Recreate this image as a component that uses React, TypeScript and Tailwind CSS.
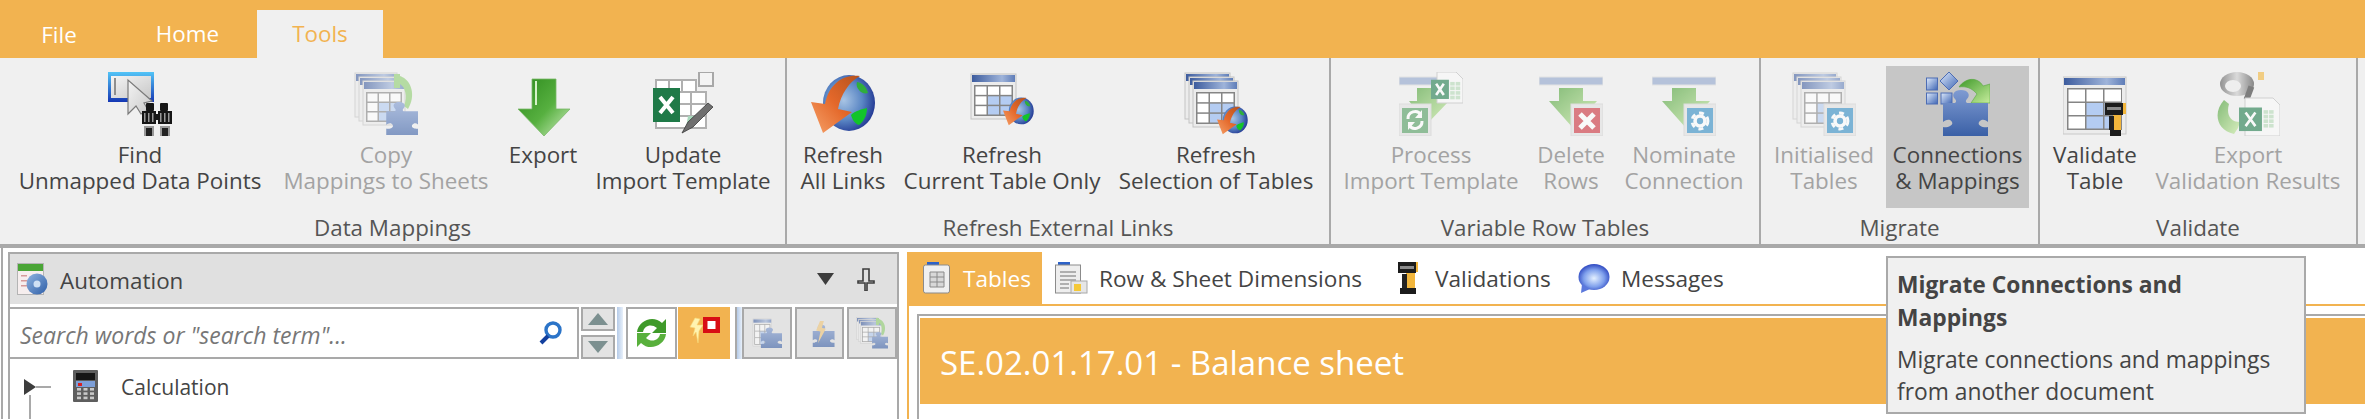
import React from "react";

const Gradients = () => (
  <svg className="block w-0 h-0" aria-hidden="true">
    <defs>
      <linearGradient id="gWin" x1="0" y1="0" x2="0" y2="1"><stop offset="0" stopColor="#52c4f7" /><stop offset="1" stopColor="#1437b4" /></linearGradient>
      <linearGradient id="gWinIn" x1="0" y1="0" x2="1" y2="1"><stop offset="0" stopColor="#f4f4f4" /><stop offset="1" stopColor="#c8c8c8" /></linearGradient>
      <linearGradient id="gHead" x1="0" y1="0" x2="1" y2="0"><stop offset="0" stopColor="#3d5c9e" /><stop offset="0.7" stopColor="#9fb4da" /><stop offset="1" stopColor="#5f7db8" /></linearGradient>
      <linearGradient id="gDown" x1="0" y1="0" x2="1" y2="1"><stop offset="0" stopColor="#2c8a1c" /><stop offset="0.55" stopColor="#57b040" /><stop offset="1" stopColor="#d2f0c2" /></linearGradient>
      <linearGradient id="gOrange" x1="1" y1="0" x2="0" y2="1"><stop offset="0" stopColor="#b5521e" /><stop offset="0.5" stopColor="#e4682a" /><stop offset="1" stopColor="#f6a26a" /></linearGradient>
      <radialGradient id="gGlobe" cx="0.4" cy="0.45" r="0.65"><stop offset="0" stopColor="#a8c4e4" /><stop offset="0.55" stopColor="#5a86c4" /><stop offset="1" stopColor="#1c2f8e" /></radialGradient>
      <linearGradient id="gPuzzle" x1="0" y1="0" x2="0" y2="1"><stop offset="0" stopColor="#7f9bd2" /><stop offset="1" stopColor="#3a60a6" /></linearGradient>
      <linearGradient id="gSq" x1="0" y1="0" x2="1" y2="1"><stop offset="0" stopColor="#dfeafb" /><stop offset="1" stopColor="#3f66b4" /></linearGradient>
      <linearGradient id="gArrow" x1="0" y1="0" x2="1" y2="1"><stop offset="0" stopColor="#3f9a2a" /><stop offset="1" stopColor="#c6ec9c" /></linearGradient>
      <linearGradient id="gMetal" x1="0" y1="0" x2="1" y2="0"><stop offset="0" stopColor="#555" /><stop offset="0.5" stopColor="#ccc" /><stop offset="1" stopColor="#444" /></linearGradient>
      <linearGradient id="gGear" x1="0" y1="0" x2="1" y2="1"><stop offset="0" stopColor="#8fb4e0" /><stop offset="1" stopColor="#2f5fa8" /></linearGradient>
      <radialGradient id="gBubble" cx="0.5" cy="0.55" r="0.55"><stop offset="0" stopColor="#e4f0ff" /><stop offset="0.6" stopColor="#7fa0ec" /><stop offset="1" stopColor="#2c46c0" /></radialGradient>
    </defs>
  </svg>
);

const Ico = ({ children, w = 64, h = 64, vb = "0 0 64 64", dim = false }: { children: React.ReactNode; w?: number; h?: number; vb?: string; dim?: boolean }) => (
  <svg width={w} height={h} viewBox={vb} className={dim ? "block shrink-0 opacity-60" : "block shrink-0"}>{children}</svg>
);

const Table = ({ x, y, w, h, plain = false }: { x: number; y: number; w: number; h: number; plain?: boolean }) => {
  const gx = x + 3, gy = y + 11, gw = w - 6, gh = h - 14;
  const cw = (gw - 6) / 3, ch = (gh - 6) / 3;
  const cells: React.ReactNode[] = [];
  if (!plain) {
    for (let r = 0; r < 3; r++) for (let c = 0; c < 3; c++) {
      const blue = (r === 1 && c >= 1) || (r === 2 && c >= 1);
      cells.push(<rect key={`${r}${c}`} x={gx + 1.5 + c * (cw + 1.5)} y={gy + 1.5 + r * (ch + 1.5)} width={cw} height={ch} fill={blue ? "#b4ccf2" : "#ffffff"} />);
    }
  }
  return (
    <g>
      <rect x={x} y={y} width={w} height={h} fill="#ececec" stroke="#c4c4c4" strokeWidth="1" />
      <rect x={x + 1} y={y + 1} width={w - 2} height={7} fill="url(#gHead)" />
      {!plain && <rect x={gx} y={gy} width={gw} height={gh} fill="#858585" />}
      {cells}
    </g>
  );
};

const Stack = ({ x = 0, y = 0, w = 42, h = 44 }: { x?: number; y?: number; w?: number; h?: number }) => (
  <g>
    <Table x={x} y={y} w={w} h={h} plain />
    <Table x={x + 4} y={y + 4} w={w} h={h} plain />
    <Table x={x + 8} y={y + 8} w={w} h={h} />
  </g>
);

const Globe = ({ t = "" }: { t?: string }) => (
  <g transform={t}>
    <ellipse cx="38" cy="31" rx="26" ry="28" fill="url(#gGlobe)" />
    <path d="M46 10c6 1 10 6 11 11-3 1-7 0-9-3-2-2-3-5-2-8z" fill="#2fae3c" />
    <path d="M40 43c4-4 11-6 16-7 0 7-3 13-8 17-4-1-7-6-8-10z" fill="#12c42a" />
    <path d="M49 4C32 2 18 12 14 32L0 30 12 61 41 40 27 37C30 22 38 10 49 4Z" fill="url(#gOrange)" />
  </g>
);

const PuzzlePiece = ({ t = "", fill = "url(#gPuzzle)" }: { t?: string; fill?: string }) => (
  <path
    transform={t}
    fill={fill}
    d="M17 31H28C30 31 31 29 29 27C25 23 28 18 35 18C42 18 45 23 41 27C39 29 40 31 42 31H62V50C60 48 56 46 53 50C51 54 58 56 62 55V64H17V55C20 56 28 54 26 50C24 46 19 48 17 50Z"
  />
);

const GreenCurve = ({ t = "" }: { t?: string }) => (
  <path transform={t} fill="url(#gArrow)" stroke="#5aa845" strokeWidth="0.6" d="M33 15C40 5 52 5 57 14L64 12V31H45L51 22C46 16 40 14 33 15Z" />
);

const Gear = ({ cx, cy, r = 9, c = "#fff" }: { cx: number; cy: number; r?: number; c?: string }) => (
  <g fill="none" stroke={c}>
    <circle cx={cx} cy={cy} r={r * 0.62} strokeWidth={r * 0.45} />
    <circle cx={cx} cy={cy} r={r} strokeWidth={r * 0.36} strokeDasharray={`${r * 0.62} ${r * 0.52}`} />
  </g>
);

const Badge = ({ x = 32, y = 32, s = 32, fill, children }: { x?: number; y?: number; s?: number; fill: string; children: React.ReactNode }) => (
  <g>
    <rect x={x} y={y} width={s} height={s} fill="#e2e2e2" stroke="#cfcfcf" />
    <rect x={x + 3} y={y + 4} width={s - 6} height={s - 7} fill={fill} />
    {children}
  </g>
);

const Excel = ({ x, y, w = 32, h = 31 }: { x: number; y: number; w?: number; h?: number }) => (
  <g>
    <path d={`M${x + 6} ${y}H${x + w - 7}L${x + w} ${y + 7}V${y + h}H${x + 6}Z`} fill="#fbfbfb" stroke="#bdbdbd" />
    <g fill="#b6dcb8">
      {[0, 1, 2, 3].map((r) => [0, 1].map((c) => (
        <rect key={`${r}${c}`} x={x + w * 0.6 + c * 5.5} y={y + h * 0.32 + r * 4.6} width={4.5} height={3.6} />
      )))}
    </g>
    <rect x={x} y={y + h * 0.25} width={w * 0.56} height={h * 0.62} fill="#1f7d4c" />
    <path d={`M${x + w * 0.16} ${y + h * 0.38}L${x + w * 0.4} ${y + h * 0.74}M${x + w * 0.4} ${y + h * 0.38}L${x + w * 0.16} ${y + h * 0.74}`} stroke="#fff" strokeWidth="2.6" />
  </g>
);

const Torch = ({ t = "" }: { t?: string }) => (
  <g transform={t}>
    <rect x="42" y="31" width="18" height="12" fill="#1c1c1c" />
    <rect x="44" y="35" width="14" height="3" fill="#8a8a8a" />
    <rect x="60" y="31" width="3" height="11" fill="#f2b63c" />
    <rect x="50" y="43" width="8" height="16" fill="#f2b63c" />
    <rect x="46" y="44" width="5" height="14" fill="#222" />
    <rect x="47" y="58" width="11" height="6" fill="#1c1c1c" />
  </g>
);

const DownBar = () => (
  <g>
    <rect x="0" y="5" width="64" height="8" fill="#8ea4cc" stroke="#dcdcdc" />
    <path d="M20 16H44V29H58L34 56 10 29H20Z" fill="url(#gArrow)" />
  </g>
);

const FindIcon = () => (
  <Ico>
    <rect x="0" y="0" width="46" height="30" fill="url(#gWin)" />
    <rect x="3" y="4" width="40" height="22" fill="url(#gWinIn)" />
    <rect x="6" y="6" width="2" height="17" fill="#8f8f8f" />
    <path d="M20 8V42L28 34 33 42 40 38 36 31 44 29Z" fill="url(#gWinIn)" stroke="#7a7a7a" strokeWidth="1.2" />
    <g fill="#161616">
      <rect x="38" y="31" width="8" height="8" rx="1" />
      <rect x="52" y="31" width="8" height="8" rx="1" />
      <rect x="34" y="39" width="14" height="13" />
      <rect x="50" y="39" width="14" height="13" />
      <rect x="46" y="42" width="6" height="6" />
    </g>
    <g fill="#999">
      <rect x="36" y="41" width="1.5" height="9" /><rect x="40" y="41" width="1.5" height="9" /><rect x="44" y="41" width="1.5" height="9" />
      <rect x="52" y="41" width="1.5" height="9" /><rect x="56" y="41" width="1.5" height="9" /><rect x="60" y="41" width="1.5" height="9" />
      <rect x="36" y="54" width="10" height="10" /><rect x="52" y="54" width="10" height="10" />
    </g>
    <rect x="38" y="56" width="6" height="8" fill="#222" />
    <rect x="54" y="56" width="6" height="8" fill="#222" />
  </Ico>
);

const CopyIcon = ({ w = 64, h = 64, dim = true }: { w?: number; h?: number; dim?: boolean }) => (
  <Ico w={w} h={h} dim={dim}>
    <Stack x={1} y={1} w={42} h={44} />
    <path d="M40 2H46V4C58 8 62 24 54 37L50 34C54 24 51 15 46 12V16H40Z" fill="#8fce70" />
    <PuzzlePiece t="translate(20 17) scale(.72)" />
  </Ico>
);

const ExportIcon = () => (
  <Ico>
    <path d="M21 7H45V37H59L33 64 7 37H21Z" fill="url(#gDown)" stroke="#7ab868" strokeWidth="0.8" />
    <rect x="24" y="9" width="2" height="24" fill="#d6f2c8" />
  </Ico>
);

const UpdateIcon = () => (
  <Ico>
    <rect x="48" y="0" width="14" height="14" fill="#f4f4f4" stroke="#a8a8a8" strokeWidth="2" />
    <rect x="5" y="8" width="40" height="12" fill="#fff" stroke="#b0b0b0" strokeWidth="2" />
    <rect x="5" y="20" width="50" height="36" fill="#fff" stroke="#b0b0b0" strokeWidth="2" />
    <path d="M18 8V20M31 8V20M40 20V56M5 32H55M5 44H55" stroke="#b0b0b0" strokeWidth="2" />
    <path d="M37 44H52L40 56H35Z" fill="#a8d8bc" />
    <rect x="2" y="16" width="27" height="34" fill="#1f7a48" />
    <path d="M9 25L22 41M22 25L9 41" stroke="#fff" strokeWidth="4" />
    <path d="M31 61L37 50 57 31 62 35 42 55Z" fill="#6f6f6f" stroke="#3a3a3a" strokeWidth="0.8" />
  </Ico>
);

const RefreshAllIcon = () => <Ico><Globe /></Ico>;
const RefreshCurrentIcon = () => (
  <Ico>
    <Table x={1} y={2} w={45} h={45} />
    <Globe t="translate(33 24) scale(.48)" />
  </Ico>
);
const RefreshSelIcon = () => (
  <Ico>
    <Stack x={1} y={1} w={45} h={46} />
    <Globe t="translate(33 33) scale(.48)" />
  </Ico>
);

const ProcessIcon = () => (
  <Ico dim>
    <rect x="0" y="5" width="40" height="8" fill="#8ea4cc" stroke="#dcdcdc" />
    <path d="M18 16H42V29H50L28 52 10 29H18Z" fill="url(#gArrow)" />
    <Excel x={32} y={0} />
    <Badge x={0} y={32} fill="#4f9c5f">
      <path d="M9 47A7 7 0 0 1 22 43M23 49A7 7 0 0 1 10 53" fill="none" stroke="#fff" strokeWidth="3" />
      <path d="M23 38V46H16ZM9 58V50H16Z" fill="#fff" />
    </Badge>
  </Ico>
);

const DeleteIcon = () => (
  <Ico dim>
    <DownBar />
    <Badge fill="#cc2f3a">
      <path d="M41 42L55 56M55 42L41 56" stroke="#fff" strokeWidth="5" />
    </Badge>
  </Ico>
);

const NominateIcon = () => (
  <Ico dim>
    <DownBar />
    <Badge fill="#2f8cc4"><Gear cx={48} cy={49} r={8} /></Badge>
  </Ico>
);

const InitIcon = () => (
  <Ico dim>
    <Stack x={1} y={1} w={44} h={46} />
    <Badge fill="#2f8cc4"><Gear cx={48} cy={49} r={8} /></Badge>
  </Ico>
);

const ConnectionsIcon = () => (
  <Ico>
    <rect x="0.5" y="6" width="11" height="12" fill="url(#gSq)" stroke="#4c6cb4" />
    <rect x="0.5" y="21" width="11" height="11" fill="url(#gSq)" stroke="#4c6cb4" />
    <rect x="15" y="21" width="11" height="11" fill="url(#gSq)" stroke="#4c6cb4" />
    <path d="M23 0L32 9 23 18 14 9Z" fill="url(#gSq)" stroke="#4c6cb4" />
    <GreenCurve />
    <PuzzlePiece />
  </Ico>
);

const ValidateIcon = () => (
  <Ico>
    <rect x="0" y="5" width="63" height="57" fill="#ececec" stroke="#c8c8c8" />
    <rect x="1" y="6" width="61" height="7" fill="url(#gHead)" />
    <rect x="4" y="16" width="55" height="42" fill="#858585" />
    {[0, 1, 2].map((r) => [0, 1, 2].map((c) => (
      <rect key={`${r}${c}`} x={5.5 + c * 18} y={17.5 + r * 13.5} width={16.5} height={12} fill={(r >= 1 && c >= 1) ? "#b4ccf2" : "#fff"} />
    )))}
    <Torch />
  </Ico>
);

const ExportValIcon = () => (
  <Ico dim>
    <path d="M8 28C-3 40 0 58 18 62L22 56 24 50C14 50 10 42 13 32Z" fill="url(#gArrow)" />
    <ellipse cx="21" cy="12" rx="17" ry="12" fill="url(#gMetal)" />
    <ellipse cx="17" cy="14" rx="8" ry="6" fill="#eee" />
    <rect x="30" y="14" width="6" height="14" fill="#333" transform="rotate(20 33 21)" />
    <rect x="42" y="0" width="6" height="8" fill="#f2b63c" />
    <Excel x={23} y={26} w={41} h={38} />
  </Ico>
);

const SyncIcon = () => (
  <Ico w={33} h={32} vb="0 0 33 32">
    <path d="M2 15C3 4 18 -3 27 6L31 2V16H17L22 11C16 6 9 9 8 15Z" fill="#3f9a2a" />
    <path d="M31 17C30 28 15 35 6 26L2 30V16H16L11 21C17 26 24 23 25 17Z" fill="#58b03c" />
  </Ico>
);

const StopIcon = () => (
  <Ico w={31} h={28} vb="0 0 31 28">
    <path d="M6 1L1 10 6 11 4 19 7 15 9 26 10 14 14 8 8 8 11 2Z" fill="#fff3b0" stroke="#f7d877" strokeWidth="0.6" />
    <rect x="14" y="0" width="17" height="16" fill="#d80e14" />
    <rect x="18.5" y="4" width="8" height="8" fill="#fff" />
  </Ico>
);

const MiniTableIcon = () => (
  <Ico w={32} h={30} dim>
    <Table x={2} y={2} w={40} h={58} />
    <PuzzlePiece t="translate(2 3) scale(1 .95)" />
  </Ico>
);

const MiniPuzzleIcon = () => (
  <Ico w={32} h={30} vb="0 4 64 62" dim>
    <PuzzlePiece />
    <path d="M32 10L24 30 33 32 28 56 44 26 36 24 40 10Z" fill="#f2c77a" />
  </Ico>
);

const AutomationIcon = () => (
  <Ico w={32} h={32} vb="0 0 32 32">
    <rect x="0.5" y="0.5" width="26" height="31" fill="#f6eeee" stroke="#b4b4b4" />
    <rect x="1" y="1" width="25" height="7" fill="#4aa536" />
    <g fill="#d49a9a">
      <rect x="4" y="12" width="6" height="1.5" /><rect x="4" y="17" width="6" height="1.5" /><rect x="4" y="22" width="6" height="1.5" />
    </g>
    <circle cx="20" cy="21" r="10.5" fill="url(#gGear)" />
    <circle cx="20" cy="21" r="3.5" fill="#cfe0f4" />
  </Ico>
);

const CalcIcon = () => (
  <Ico w={25} h={32} vb="0 0 25 32">
    <rect x="0" y="0" width="25" height="32" rx="1" fill="#5e5e5e" />
    <rect x="3" y="3" width="19" height="7" fill="#161616" />
    <rect x="3" y="11" width="19" height="6" fill="#7d9fd8" />
    <rect x="5" y="13" width="4" height="3" fill="#d92020" />
    <g fill="#c8c8c8">
      {[0, 1, 2].map((r) => [0, 1, 2].map((c) => <rect key={`${r}${c}`} x={4 + c * 6.5} y={18 + r * 4.3} width={4} height={2.6} />))}
    </g>
  </Ico>
);

const TablesTabIcon = () => (
  <Ico w={27} h={32} vb="0 0 27 32">
    <rect x="4" y="0" width="12" height="5" fill="#2d62c8" />
    <rect x="0.5" y="3" width="26" height="28" rx="2" fill="#f0f0f0" stroke="#8b8b8b" />
    <path d="M7 10H21V25H7ZM7 15H21M7 20H21M14 10V25" fill="#d8d8d8" stroke="#8a8a8a" />
  </Ico>
);

const RowsTabIcon = () => (
  <Ico w={33} h={32} vb="0 0 33 32">
    <rect x="3" y="0" width="12" height="5" fill="#2d62c8" />
    <rect x="0.5" y="3" width="25" height="28" fill="#eeeeee" stroke="#8b8b8b" />
    <path d="M5 10H21M5 14H21M5 18H21M5 22H14M5 26H14" stroke="#9a9a9a" strokeWidth="1.6" />
    <rect x="16" y="19" width="16" height="12" fill="#e6e6e6" stroke="#a8a8a8" />
    <rect x="19" y="22" width="7" height="7" fill="#f4c838" />
  </Ico>
);

const ValidationTabIcon = () => (
  <Ico w={20} h={32} vb="0 0 20 32">
    <rect x="0" y="0" width="18" height="11" fill="#1c1c1c" />
    <rect x="2" y="4" width="14" height="3" fill="#8a8a8a" />
    <rect x="18" y="0" width="2" height="10" fill="#f2b63c" />
    <rect x="8" y="11" width="9" height="15" fill="#f2b63c" />
    <rect x="4" y="12" width="5" height="14" fill="#222" />
    <rect x="2" y="26" width="16" height="6" fill="#1c1c1c" />
  </Ico>
);

const MessagesIcon = () => (
  <Ico w={32} h={29} vb="0 0 32 29">
    <ellipse cx="16" cy="13" rx="15.5" ry="13" fill="url(#gBubble)" />
    <path d="M4 20L3 29 12 25Z" fill="#5b78dc" />
  </Ico>
);

const SearchIcon = () => (
  <Ico w={25} h={24} vb="0 0 25 24">
    <circle cx="15" cy="9" r="7" fill="none" stroke="#2b74c8" strokeWidth="3.4" />
    <path d="M10 15L3 22" stroke="#123f9e" strokeWidth="4" />
  </Ico>
);

type Btn = { w: number; l: string[]; icon: React.ReactNode; off?: boolean; hot?: boolean };
type Grp = { w: number; pl: string; label: string; btns: Btn[] };

const groups: Grp[] = [
  { w: 787, pl: "pl-[14px]", label: "Data Mappings", btns: [
    { w: 252, l: ["Find", "Unmapped Data Points"], icon: <FindIcon /> },
    { w: 240, l: ["Copy", "Mappings to Sheets"], icon: <CopyIcon />, off: true },
    { w: 74, l: ["Export"], icon: <ExportIcon /> },
    { w: 206, l: ["Update", "Import Template"], icon: <UpdateIcon /> },
  ] },
  { w: 544, pl: "pl-[10px]", label: "Refresh External Links", btns: [
    { w: 92, l: ["Refresh", "All Links"], icon: <RefreshAllIcon /> },
    { w: 226, l: ["Refresh", "Current Table Only"], icon: <RefreshCurrentIcon /> },
    { w: 202, l: ["Refresh", "Selection of Tables"], icon: <RefreshSelIcon /> },
  ] },
  { w: 430, pl: "pl-[9px]", label: "Variable Row Tables", btns: [
    { w: 182, l: ["Process", "Import Template"], icon: <ProcessIcon />, off: true },
    { w: 98, l: ["Delete", "Rows"], icon: <DeleteIcon />, off: true },
    { w: 128, l: ["Nominate", "Connection"], icon: <NominateIcon />, off: true },
  ] },
  { w: 279, pl: "pl-[7px]", label: "Migrate", btns: [
    { w: 112, l: ["Initialised", "Tables"], icon: <InitIcon />, off: true },
    { w: 143, l: ["Connections", "& Mappings"], icon: <ConnectionsIcon />, hot: true },
  ] },
  { w: 318, pl: "pl-[8px]", label: "Validate", btns: [
    { w: 94, l: ["Validate", "Table"], icon: <ValidateIcon /> },
    { w: 212, l: ["Export", "Validation Results"], icon: <ExportValIcon />, off: true },
  ] },
];

const RibbonButton = ({ b }: { b: Btn }) => (
  <div
    style={{ width: b.w }}
    className={`flex flex-col items-center h-[142px] pt-[6px] shrink-0 ${b.hot ? "bg-[#c6c6c6]" : ""}`}
  >
    {b.icon}
    <div className={`mt-[6px] text-center text-[22.4px] leading-[26px] whitespace-nowrap ${b.off ? "text-[#a3a3a3]" : "text-[#444444]"}`}>
      {b.l[0]}
      {b.l[1] && <br />}
      {b.l[1]}
    </div>
  </div>
);

const ToolBtn = ({ children, w = 50 }: { children: React.ReactNode; w?: number }) => (
  <div style={{ width: w }} className="h-full flex items-center justify-center bg-[#e3e3e3] border-2 border-[#a9a9a9] shrink-0">{children}</div>
);

export default function App() {
  return (
    <div className="relative w-[2365px] h-[419px] overflow-hidden bg-white text-[#444444] font-['Open_Sans',sans-serif]">
      <Gradients />
      <div className="flex items-end h-[58px] bg-[#f2b350] text-white text-[22.4px]">
        <div className="w-[118px] h-[48px] pt-[2px] flex items-center justify-center">File</div>
        <div className="w-[139px] h-[48px] flex items-center justify-center">Home</div>
        <div className="w-[126px] h-[48px] flex items-center justify-center bg-[#f0f0f0] text-[#f2b350]">Tools</div>
      </div>

      <div className="flex h-[190px] bg-[#f0f0f0] border-b-4 border-[#a9a9a9]">
        {groups.map((g) => (
          <div key={g.label} style={{ width: g.w }} className="flex flex-col shrink-0 border-r-2 border-[#a9a9a9]">
            <div className={`flex shrink-0 pt-[8px] ${g.pl} ${g.label === "Migrate" ? "gap-[6px]" : ""}`}>
              {g.btns.map((b) => <RibbonButton key={b.l.join()} b={b} />)}
            </div>
            <div className="pt-[2px] text-center text-[22.4px] leading-[36px] text-[#555555]">{g.label}</div>
          </div>
        ))}
      </div>

      <div className="flex h-[171px]">
        <div className="ml-px w-[898px] shrink-0 border-l-2 border-[#a9a9a9] pl-[5px] pt-[4px]">
          <div className="h-full border-x-2 border-t-2 border-[#a9a9a9] flex flex-col overflow-hidden">
            <div className="h-[50px] shrink-0 flex items-center bg-[#e0e0e0] pl-[7px] pr-[22px]">
              <AutomationIcon />
              <span className="ml-[11px] pt-[3px] text-[22.4px]">Automation</span>
              <svg width="17" height="12" viewBox="0 0 17 12" className="ml-auto"><path d="M0 0H17L8.5 12Z" fill="#3d3d3d" /></svg>
              <svg width="18" height="23" viewBox="0 0 18 23" className="ml-[23px]"><path d="M6 1H12V13H17V15H10V23H8V15H1V13H6Z" fill="none" stroke="#3d3d3d" strokeWidth="1.6" /></svg>
            </div>
            <div className="flex h-[52px] shrink-0 mt-[3px] items-stretch">
              <div className="w-[569px] shrink-0 flex items-center justify-between bg-white border-y-2 border-r-2 border-[#a9a9a9] pl-[10px] pr-[14px]">
                <span className="italic pt-[4px] text-[23px] text-[#777777]">Search words or "search term"...</span>
                <SearchIcon />
              </div>
              <div className="ml-[2px] w-[34px] shrink-0 flex flex-col justify-between">
                <div className="h-[24px] bg-[#e3e3e3] border-2 border-[#a9a9a9] flex items-center justify-center">
                  <svg width="20" height="12" viewBox="0 0 20 12"><path d="M10 0L20 12H0Z" fill="#7c9090" /></svg>
                </div>
                <div className="h-[24px] bg-[#e3e3e3] border-2 border-[#a9a9a9] flex items-center justify-center">
                  <svg width="20" height="12" viewBox="0 0 20 12"><path d="M0 0H20L10 12Z" fill="#7c9090" /></svg>
                </div>
              </div>
              <div className="ml-[2px] w-[6px] shrink-0 bg-gradient-to-r from-[#b5cbe8] to-[#e8f0fa]" />
              <div className="ml-[3px] w-[51px] h-full flex items-center justify-center bg-white border-2 border-[#a9a9a9] shrink-0"><SyncIcon /></div>
              <div className="ml-px w-[52px] flex items-start justify-end pt-[10px] pr-[10px] bg-[#f2b350] shrink-0"><StopIcon /></div>
              <div className="ml-[5px] w-[2px] bg-[#a9a9a9] shrink-0" />
              <div className="w-[5px] shrink-0 bg-gradient-to-r from-[#b5cbe8] to-[#e8f0fa]" />
              <ToolBtn><MiniTableIcon /></ToolBtn>
              <div className="w-[3px] shrink-0" />
              <ToolBtn w={49}><MiniPuzzleIcon /></ToolBtn>
              <div className="w-[3px] shrink-0" />
              <ToolBtn><CopyIcon w={32} h={32} dim /></ToolBtn>
            </div>
            <div className="flex items-start shrink-0 mt-[11px] pl-[14px]">
              <svg width="27" height="49" viewBox="0 0 27 49" className="mt-[9px] shrink-0">
                <path d="M12 8H27" stroke="#a9a9a9" strokeWidth="2" />
                <path d="M6 16V49" stroke="#a9a9a9" strokeWidth="2" />
                <path d="M0 0L12 8 0 16Z" fill="#3d3d3d" />
              </svg>
              <div className="ml-[22px]"><CalcIcon /></div>
              <span className="ml-[23px] text-[21px] leading-[34px]">Calculation</span>
            </div>
          </div>
        </div>

        <div className="ml-[8px] grow pt-[4px] flex flex-col min-w-0">
          <div className="flex h-[52px] shrink-0 text-[22.6px]">
            <div className="w-[135px] flex items-center pl-[16px] gap-[13px] bg-[#f2b350] text-white shrink-0"><TablesTabIcon /><span className="pt-[2px]">Tables</span></div>
            <div className="w-[343px] flex items-center pl-[13px] gap-[11px] shrink-0"><RowsTabIcon /><span className="pt-[2px] whitespace-nowrap">Row &amp; Sheet Dimensions</span></div>
            <div className="w-[180px] flex items-center pl-[13px] gap-[17px] shrink-0"><ValidationTabIcon /><span className="pt-[2px]">Validations</span></div>
            <div className="flex items-center pl-[13px] gap-[11px]"><MessagesIcon /><span className="pt-[2px]">Messages</span></div>
          </div>
          <div className="grow border-t-2 border-l-2 border-[#f2b350] pl-[8px] pt-[8px]">
            <div className="h-full border-t-2 border-l-2 border-[#a9a9a9] pl-px pt-[2px]">
              <div className="h-[86px] flex items-center pl-[20px] pt-[3px] bg-[#f2b350] text-white text-[33px]">SE.02.01.17.01 - Balance sheet</div>
            </div>
          </div>
        </div>
      </div>

      <div className="absolute left-[1886px] top-[256px] w-[420px] h-[158px] bg-[#f0f0f0] border-2 border-[#a9a9a9] pl-[9px] pt-[10px] text-[22.8px] text-[#444444]">
        <div className="font-bold leading-[33px]">Migrate Connections and<br />Mappings</div>
        <div className="mt-[10px] leading-[32px]">Migrate connections and mappings<br />from another document</div>
      </div>
    </div>
  );
}
